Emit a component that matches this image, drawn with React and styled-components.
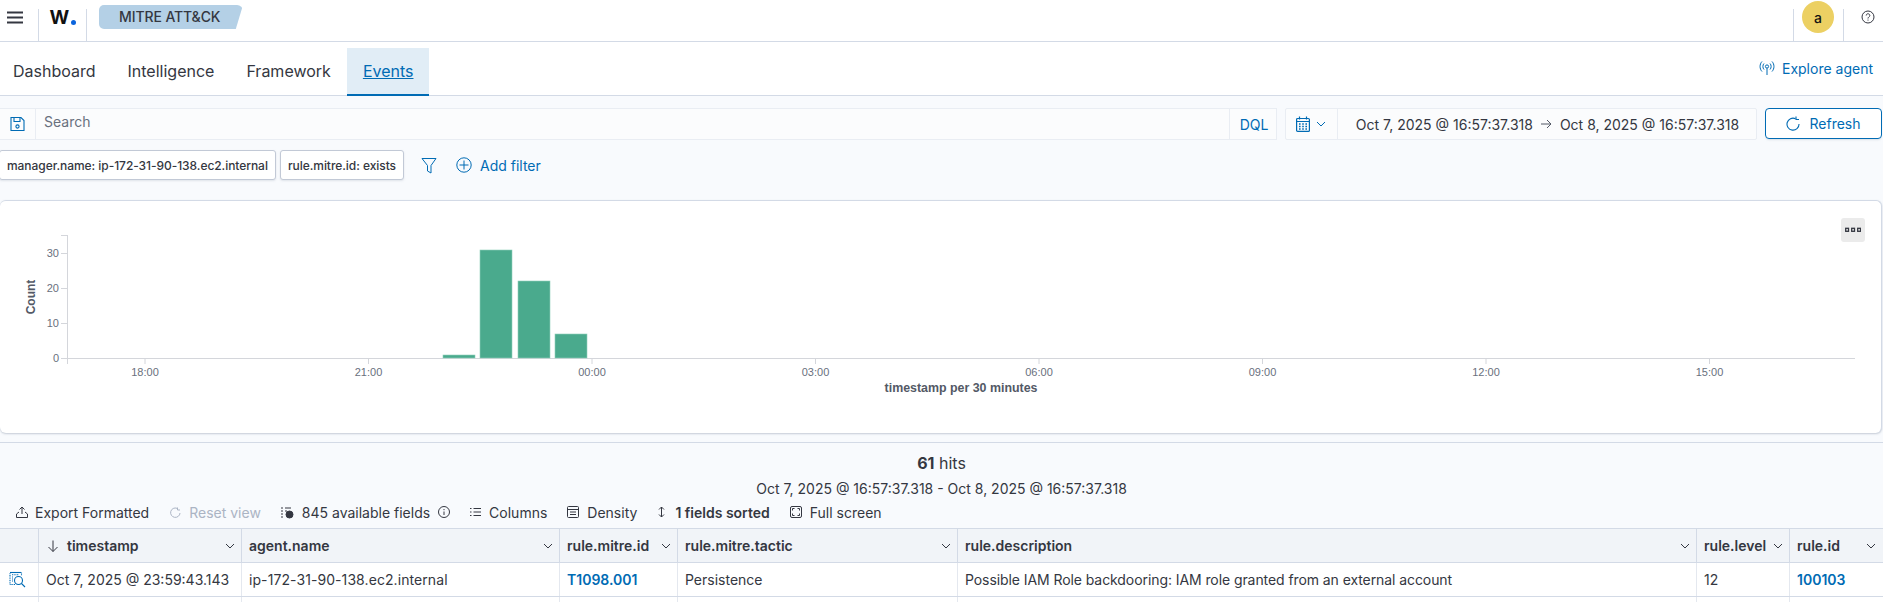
import React from "react";
import styled, { createGlobalStyle } from "styled-components";

const Global = createGlobalStyle`
  html, body { margin: 0; padding: 0; background: #fff; }
  body { font-family: Inter, "Liberation Sans", sans-serif; color: #343741; width: 1883px; height: 602px; overflow: hidden; }
`;
const Page = styled.div`width: 1883px; height: 602px; overflow: hidden; display: flex; flex-direction: column; background: #f8fafd;`;

const TopBar = styled.header`
  height: 41px; flex: none; background: #fff; border-bottom: 1px solid #d3dae6; box-sizing: content-box;
  display: flex; align-items: stretch;
`;
const MenuCell = styled.div`width: 39px; margin-top: 9px; border-right: 1px solid #d3dae6; display: flex; align-items: flex-start; justify-content: center; padding: 2px 8px 0 0; box-sizing: border-box;`;
const LogoCell = styled.div`width: 48px; margin-top: 9px; border-right: 1px solid #d3dae6; box-sizing: border-box; display: flex; justify-content: center; padding-top: 1px;`;
const Logo = styled.div`display: flex; align-items: flex-end; height: 15px; font: 700 19px/15px Inter, sans-serif; color: #111; letter-spacing: -0.5px;`;
const Dot = styled.span`width: 5px; height: 5px; margin: 0 0 0 2px; border-radius: 50%; background: #0b64dd;`;
const Crumb = styled.div`
  margin: 5px 0 0 12px; width: 144px; height: 24px; background: #b4d0e6; border-radius: 5px 6px 4px 5px;
  clip-path: polygon(0 0, 100% 0, 95% 100%, 0 100%);
  font-size: 14px; line-height: 24px; padding-left: 20px; box-sizing: border-box; color: #343741; font-weight: 500; white-space: nowrap; letter-spacing: -0.1px;
`;
const Grow = styled.div`flex: 1;`;
const AvatarCell = styled.div`width: 51px; margin-top: 9px; border-left: 1px solid #d3dae6; border-right: 1px solid #d3dae6; box-sizing: border-box; position: relative;`;
const Avatar = styled.div`
  position: absolute; left: 8px; top: -8px; width: 32px; height: 32px; border-radius: 50%; background: #ecd063; color: #111;
  font-size: 14px; font-weight: 500; display: flex; align-items: center; justify-content: center;
`;
const HelpCell = styled.div`width: 39px; display: flex; justify-content: center; padding: 10px 0 0 9px; box-sizing: border-box; color: #343741;`;

const TabBar = styled.nav`
  height: 54px; flex: none; background: #fff; border-bottom: 1px solid #d3dae6; display: flex; align-items: flex-end; box-sizing: border-box; padding-left: 0;
`;
const Tab = styled.div`
  height: 48px; padding: 0 16px; margin-bottom: -1px; box-sizing: border-box; display: flex; align-items: center; font-size: 16px; white-space: nowrap;
  &:first-child { margin-left: -3px; }
  color: ${p => p.$active ? "#006bb4" : "#343741"};
  background: ${p => p.$active ? "#e1edf6" : "transparent"};
  border-bottom: 2px solid ${p => p.$active ? "#006bb4" : "transparent"};
  text-decoration: ${p => p.$active ? "underline" : "none"};
`;
const Explore = styled.div`margin: 0 10px 16px auto; display: flex; align-items: center; gap: 7px; color: #006bb4; font-size: 14px; height: 22px;`;

const QueryRow = styled.div`display: flex; align-items: stretch; margin-top: 12px; height: 32px; flex: none; padding-right: 1px;`;
const SearchBox = styled.div`width: 1277px; box-sizing: border-box; background: #fbfcfd; border: 1px solid #e9edf3; border-left: none; display: flex; align-items: stretch; font-size: 14px;`;
const SaveBtn = styled.div`width: 35px; border-right: 1px solid #e9edf3; display: flex; align-items: center; justify-content: center; color: #006bb4;`;
const Placeholder = styled.div`flex: 1; padding: 0 0 5px 8px; color: #69707d; display: flex; align-items: center;`;
const Dql = styled.div`width: 47px; border-left: 1px solid #e9edf3; color: #006bb4; display: flex; align-items: center; justify-content: center; padding-left: 2px; box-sizing: border-box;`;
const DateBox = styled.div`margin-left: 8px; width: 472px; box-sizing: border-box; background: #fbfcfd; border: 1px solid #e9edf3; border-radius: 2px; display: flex; font-size: 14px;`;
const CalBtn = styled.div`width: 52px; border-right: 1px solid #e9edf3; display: flex; align-items: center; padding-left: 10px; gap: 6px; box-sizing: border-box; color: #006bb4;`;
const DateText = styled.div`flex: 1; display: flex; align-items: center; justify-content: center; gap: 8px; color: #343741; white-space: nowrap; padding-left: 1px;`;
const Refresh = styled.div`
  margin-left: 8px; width: 117px; box-sizing: border-box; height: 31px; border: 1px solid #006bb4; border-radius: 4px; background: #fff;
  color: #006bb4; font-size: 14px; display: flex; align-items: center; justify-content: center; gap: 9px; box-shadow: 0 2px 2px -1px rgba(152,162,179,.3);
`;

const FilterRow = styled.div`display: flex; align-items: center; height: 30px; margin-top: 10px; flex: none; margin-left: -1px;`;
const Pill = styled.div`
  height: 30px; box-sizing: border-box; background: #fff; border: 1px solid #c2c9d6; border-radius: 3px; font-size: 12px; font-weight: 500; color: #343741; letter-spacing: -0.055px;
  display: flex; align-items: center; padding: 0 7px 0 7px; margin-right: 4px; white-space: nowrap; width: ${p => p.$w}px; box-shadow: 0 1px 2px rgba(152,162,179,.25);
`;
const FilterIcon = styled.div`margin-left: 13px; color: #006bb4; display: flex;`;
const AddFilter = styled.div`margin-left: 19px; display: flex; align-items: center; gap: 8px; color: #006bb4; font-size: 14px;`;

const ChartPanel = styled.section`
  flex: none; width: 1882px; height: 233px; margin-top: 20px; background: #fff; border-top: 1px solid #d3dae6; border-right: 1px solid #d3dae6; border-radius: 6px; box-sizing: border-box;
  box-shadow: 0 1px 2px rgba(100,115,140,.35); position: relative;
`;
const DotsBtn = styled.div`position: absolute; left: 1841px; top: 17px; width: 24px; height: 24px; background: #ebebeb; border-radius: 3px; display: flex; align-items: center; justify-content: center;`;
const ChartSvg = styled.svg`display: block;`;

const TablePanel = styled.section`flex: 1; margin-top: 9px; border-top: 1px solid #d3dae6; display: flex; flex-direction: column; min-height: 0; overflow: hidden;`;
const Hits = styled.div`flex: none; height: 24px; margin-top: 8px; text-align: center; font-size: 16px; line-height: 24px; color: #343741; b { font-weight: 700; }`;
const Range = styled.div`flex: none; height: 18px; margin-top: 5px; text-align: center; font-size: 14px; line-height: 18px; color: #343741;`;
const Toolbar = styled.div`flex: none; height: 20px; margin-top: 4px; display: flex; align-items: center; font-size: 14px; padding-left: 16px; white-space: nowrap;`;
const ToolItem = styled.div`display: flex; align-items: center; gap: ${p => p.$gap || 8}px; margin-left: ${p => p.$ml || 0}px; color: ${p => p.$muted ? "#abb4c4" : "#343741"}; font-weight: ${p => p.$bold ? 600 : 400};`;

const Grid = styled.div`flex: none; margin-top: 6px; background: #fff; border-top: 1px solid #d3dae6;`;
const cols = "39px 203px 318px 118px 280px 739px 93px 1fr";
const Row = styled.div`display: grid; grid-template-columns: ${cols}; height: ${p => p.$h}px; box-sizing: border-box; border-bottom: ${p => p.$nb ? 0 : "1px solid #d3dae6"}; background: ${p => p.$head ? "#f1f4f8" : "#fff"};`;
const HeadCell = styled.div`
  border-right: 1px solid #d3dae6; display: flex; align-items: center; padding: 0 6px 0 7px; font-size: 14px; font-weight: 600; color: #343741; box-sizing: border-box; justify-content: space-between; min-width: 0; white-space: nowrap;
  &:last-child { border-right: none; padding-right: 7px; }
`;
const HeadLabel = styled.span`display: flex; align-items: center; gap: 8px; padding-left: 1px;`;
const BodyCell = styled.div`
  border-right: 1px solid #e4e8ef; display: flex; align-items: center; padding: 0 6px 0 7px; font-size: 14px; color: ${p => p.$link ? "#006bb4" : "#343741"}; font-weight: ${p => p.$link ? 600 : 400}; box-sizing: border-box; white-space: nowrap; min-width: 0;
  letter-spacing: ${p => p.$ls || 0}px;
  &:last-child { border-right: none; }
`;
const InspectIcon = styled.svg`margin-left: 2px; flex: none;`;

const Chev = ({ s = 10, c = "#343741" }) => (
  <svg width={s} height={s} viewBox="0 0 10 10" fill="none" stroke={c} strokeWidth="1"><path d="M1 3l4 4 4-4" /></svg>
);

const xTicks = [["18:00", 145], ["21:00", 368.5], ["00:00", 592], ["03:00", 815.5], ["06:00", 1039], ["09:00", 1262.5], ["12:00", 1486], ["15:00", 1709.5]];
const yTicks = [["30", 53], ["20", 88], ["10", 123], ["0", 158]];
const bars = [[443, 155, 32], [480, 50, 32], [518, 81, 32], [555, 134, 32]];
const axisFont = '"Liberation Sans", Arial, sans-serif';

const Chart = () => (
  <ChartSvg width="1881" height="232" viewBox="0 1 1881 232">
    <g stroke="#d4d6db" strokeWidth="1" fill="none">
      <path d="M67.500 35V164M61 35.500h7M61 53.500h7M61 88.500h7M61 123.500h7M61 158.500H1855" />
      {xTicks.map(([l, x]) => <path key={l} d={`M${x} 158v6`} />)}
    </g>
    {bars.map(([x, y, w]) => (
      <rect key={x} x={x} y={y} width={w} height={158 - y} fill="#4aaa8d" stroke="#8fd0bb" strokeWidth="0.6" />
    ))}
    <g fontFamily={axisFont} fontSize="11" fill="#69707d">
      {xTicks.map(([l, x]) => <text key={l} x={x} y={176} textAnchor="middle">{l}</text>)}
      {yTicks.map(([l, y]) => <text key={l} x={59} y={y + 4} textAnchor="end">{l}</text>)}
    </g>
    <text transform="translate(35 97) rotate(-90)" textAnchor="middle" fontFamily={axisFont} fontSize="12" fontWeight="700" fill="#535966">Count</text>
    <text x="961" y="192" textAnchor="middle" fontFamily={axisFont} fontSize="12.400" fontWeight="700" fill="#535966">timestamp per 30 minutes</text>
  </ChartSvg>
);

export default function App() {
  return (
    <Page>
      <Global />
      <TopBar>
        <MenuCell>
          <svg width="16" height="13" viewBox="0 0 16 13" stroke="#343741" strokeWidth="2"><path d="M0 1.500h16M0 6.500h16M0 11.500h16" /></svg>
        </MenuCell>
        <LogoCell><Logo>W<Dot /></Logo></LogoCell>
        <Crumb>MITRE ATT&amp;CK</Crumb>
        <Grow />
        <AvatarCell><Avatar>a</Avatar></AvatarCell>
        <HelpCell>
          <svg width="14" height="14" viewBox="0 0 14 14" fill="none" stroke="#343741" strokeWidth="1"><circle cx="7" cy="7" r="6" /><path d="M5.200 5.500c0-2.300 3.600-2.300 3.600 0 0 1.500-1.800 1.400-1.800 3M7 9.600v1" /></svg>
        </HelpCell>
      </TopBar>
      <TabBar>
        <Tab>Dashboard</Tab>
        <Tab>Intelligence</Tab>
        <Tab>Framework</Tab>
        <Tab $active>Events</Tab>
        <Explore>
          <svg width="16" height="16" viewBox="0 0 16 16" fill="none" stroke="#006bb4" strokeWidth="1"><circle cx="8" cy="6.500" r="1.600" /><path d="M8 8.200V15M5 3.500c-1.500 1.600-1.500 4.400 0 6M11 3.500c1.500 1.600 1.500 4.400 0 6M3 1.500c-2.600 2.800-2.600 7.200 0 10M13 1.500c2.600 2.800 2.600 7.200 0 10" /></svg>
          Explore agent
        </Explore>
      </TabBar>
      <QueryRow>
        <SearchBox>
          <SaveBtn>
            <svg width="15" height="16" viewBox="0 0 15 16" fill="none" stroke="#006bb4" strokeWidth="1.100"><path d="M1 1.500h10l3 3v10H1z" /><path d="M4 1.500v4h6v-4" /><circle cx="7.500" cy="10.500" r="1.600" /></svg>
          </SaveBtn>
          <Placeholder>Search</Placeholder>
          <Dql>DQL</Dql>
        </SearchBox>
        <DateBox>
          <CalBtn>
            <svg width="14" height="16" viewBox="0 0 14 16" fill="none" stroke="#006bb4" strokeWidth="1.200"><rect x=".6" y="2.500" width="12.800" height="12.900" rx="1" /><path d="M.6 5.500h12.800M3.500 .5v3M10.500 .5v3" /><path strokeWidth="1.500" d="M3 8h1.600M6.200 8h1.600M9.400 8h1.600M3 10.500h1.600M6.200 10.500h1.600M9.400 10.500h1.600M3 13h1.600M6.200 13h1.600M9.400 13h1.600" /></svg>
            <Chev c="#006bb4" />
          </CalBtn>
          <DateText>
            <span>Oct 7, 2025 @ 16:57:37.318</span>
            <svg width="11" height="10" viewBox="0 0 11 10" fill="none" stroke="#535966" strokeWidth="1"><path d="M0 5h10M6 1l4 4-4 4" /></svg>
            <span>Oct 8, 2025 @ 16:57:37.318</span>
          </DateText>
        </DateBox>
        <Refresh>
          <svg width="14" height="15" viewBox="0 0 14 15" fill="none" stroke="#006bb4" strokeWidth="1.100"><path d="M9.500 2.700A6 6 0 1 0 13 8" /><path d="M10 .5v3h3" /></svg>
          Refresh
        </Refresh>
      </QueryRow>
      <FilterRow>
        <Pill $w={277}>manager.name: ip-172-31-90-138.ec2.internal</Pill>
        <Pill $w={124}>rule.mitre.id: exists</Pill>
        <FilterIcon>
          <svg width="16" height="17" viewBox="0 0 16 17" fill="none" stroke="#006bb4" strokeWidth="1"><path d="M1 1.500h14l-5 7V16l-3.500-2V8.500z" strokeLinejoin="round" /></svg>
        </FilterIcon>
        <AddFilter>
          <svg width="16" height="16" viewBox="0 0 16 16" fill="none" stroke="#006bb4" strokeWidth="1"><circle cx="8" cy="8" r="7.200" /><path d="M8 3.500v9M3.500 8h9" /></svg>
          Add filter
        </AddFilter>
      </FilterRow>
      <ChartPanel>
        <Chart />
        <DotsBtn>
          <svg width="16" height="6" viewBox="0 0 16 6" fill="none" stroke="#343741" strokeWidth="1.300"><rect x=".7" y="1.300" width="2.800" height="3" /><rect x="6.700" y="1.300" width="2.800" height="3" /><rect x="12.700" y="1.300" width="2.800" height="3" /></svg>
        </DotsBtn>
      </ChartPanel>
      <TablePanel>
        <Hits><b>61</b> hits</Hits>
        <Range>Oct 7, 2025 @ 16:57:37.318 - Oct 8, 2025 @ 16:57:37.318</Range>
        <Toolbar>
          <ToolItem $gap={7}>
            <svg width="12" height="12" viewBox="0 0 12 12" fill="none" stroke="#343741" strokeWidth="1"><path d="M.5 8v3.500h11V8l-2.500-2M.5 8L3 6M6 8V1M3.500 3.500L6 1l2.500 2.500" /></svg>
            Export Formatted
          </ToolItem>
          <ToolItem $ml={21} $muted>
            <svg width="11" height="11" viewBox="0 0 11 11" fill="none" stroke="#abb4c4" strokeWidth="1"><path d="M7 1.300A4.700 4.700 0 1 0 10 6M7.500 .5v2.500H10" /></svg>
            Reset view
          </ToolItem>
          <ToolItem $ml={20}>
            <svg width="13" height="13" viewBox="0 0 13 13" fill="none" stroke="#343741" strokeWidth="1"><path d="M0 2h2M0 5h2M0 8h2M0 11h2M4 2h6M4 5h2" /><circle cx="8.500" cy="8.500" r="3.500" fill="#343741" /></svg>
            845 available fields
            <svg width="12" height="12" viewBox="0 0 12 12" fill="none" stroke="#343741" strokeWidth="1"><circle cx="6" cy="6" r="5.500" /><path d="M6 5.500V9M6 3v1.200" /></svg>
          </ToolItem>
          <ToolItem $ml={20}>
            <svg width="11" height="10" viewBox="0 0 11 10" fill="none" stroke="#343741" strokeWidth="1"><path d="M0 1.500h1.500M0 5h1.500M0 8.500h1.500M3.500 1.500H11M3.500 5H11M3.500 8.500H11" /></svg>
            Columns
          </ToolItem>
          <ToolItem $ml={20}>
            <svg width="12" height="12" viewBox="0 0 12 12" fill="none" stroke="#343741" strokeWidth="1"><rect x=".5" y=".5" width="11" height="11" rx="1" /><path d="M.5 3.500h11M3 6h6M3 8.500h6" /></svg>
            Density
          </ToolItem>
          <ToolItem $ml={20} $bold $gap={9}>
            <svg width="9" height="12" viewBox="0 0 9 12" fill="none" stroke="#343741" strokeWidth="1"><path d="M4.500 1v10M2 3.500L4.500 1 7 3.500M2 8.500L4.500 11 7 8.500" /></svg>
            1 fields sorted
          </ToolItem>
          <ToolItem $ml={20}>
            <svg width="12" height="12" viewBox="0 0 12 12" fill="none" stroke="#343741" strokeWidth="1"><rect x=".5" y=".5" width="11" height="11" rx="1.500" /><path d="M2.500 4.500v-2h2M7.500 2.500h2v2M9.500 7.500v2h-2M4.500 9.500h-2v-2" /></svg>
            Full screen
          </ToolItem>
        </Toolbar>
        <Grid>
          <Row $head $h={34}>
            <HeadCell />
            <HeadCell>
              <HeadLabel>
                <svg width="12" height="12" viewBox="0 0 12 12" fill="none" stroke="#343741" strokeWidth="1"><path d="M6 .5v11M1.500 7L6 11.500 10.500 7" /></svg>
                timestamp
              </HeadLabel>
              <Chev />
            </HeadCell>
            <HeadCell><span>agent.name</span><Chev /></HeadCell>
            <HeadCell><span>rule.mitre.id</span><Chev /></HeadCell>
            <HeadCell><span>rule.mitre.tactic</span><Chev /></HeadCell>
            <HeadCell><span>rule.description</span><Chev /></HeadCell>
            <HeadCell><span>rule.level</span><Chev /></HeadCell>
            <HeadCell><span>rule.id</span><Chev /></HeadCell>
          </Row>
          <Row $h={34}>
            <BodyCell>
              <InspectIcon width="17" height="17" viewBox="0 0 17 17" fill="none" stroke="#006bb4" strokeWidth="1.100"><path d="M1 1.500h11" /><path d="M6 13.500H1v-12M12.500 1.500v3.500M3 3.800h7M3 6h1.500M3 8h1.500M3 10h1.500" strokeDasharray="1 0.700" /><circle cx="9.500" cy="9.500" r="4" /><path d="M12.500 12.500l3.500 3.500" /></InspectIcon>
            </BodyCell>
            <BodyCell>Oct 7, 2025 @ 23:59:43.143</BodyCell>
            <BodyCell $ls={0.08}>ip-172-31-90-138.ec2.internal</BodyCell>
            <BodyCell $link>T1098.001</BodyCell>
            <BodyCell>Persistence</BodyCell>
            <BodyCell $ls={-0.08}>Possible IAM Role backdooring: IAM role granted from an external account</BodyCell>
            <BodyCell>12</BodyCell>
            <BodyCell $link>100103</BodyCell>
          </Row>
          <Row $h={6} $nb>
            <BodyCell /><BodyCell /><BodyCell /><BodyCell /><BodyCell /><BodyCell /><BodyCell /><BodyCell />
          </Row>
        </Grid>
      </TablePanel>
    </Page>
  );
}
